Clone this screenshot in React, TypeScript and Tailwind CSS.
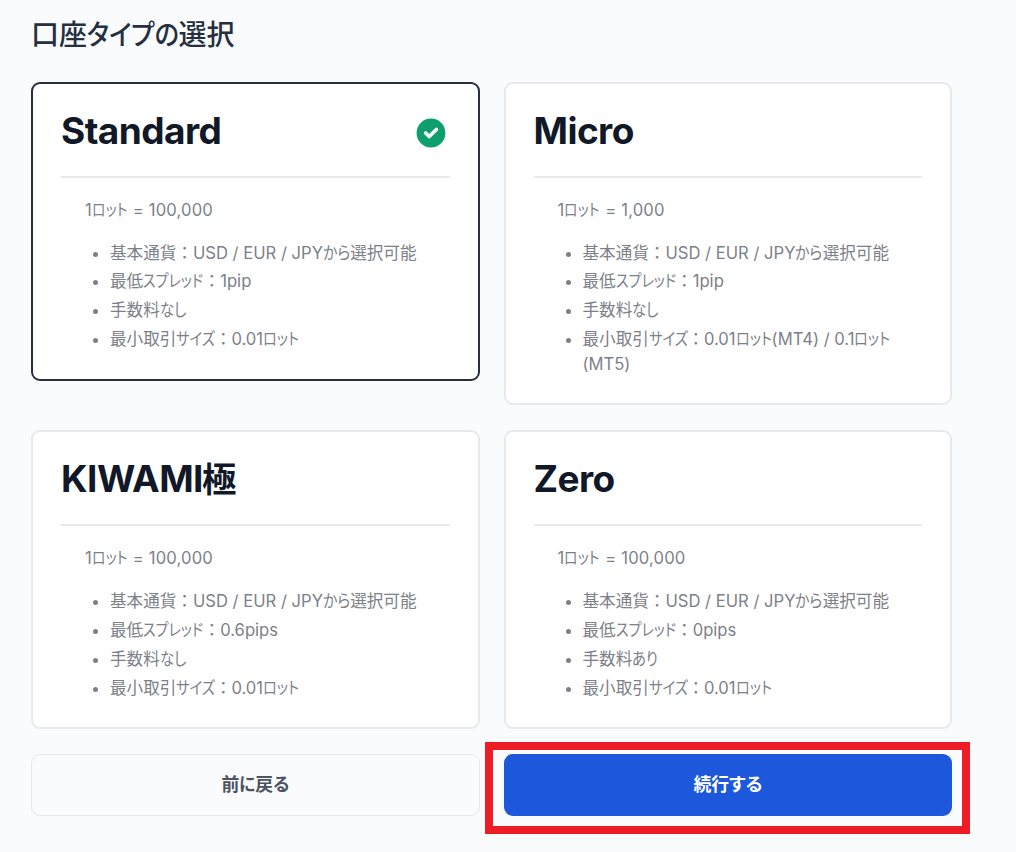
import { useLayoutEffect, useRef, useState } from "react";
import clsx from "clsx";

type Account = {
  name: string;
  lot: string;
  features: string[];
};

const ACCOUNTS: Account[] = [
  {
    name: "Standard",
    lot: "1ロット = 100,000",
    features: [
      "基本通貨：USD / EUR / JPYから選択可能",
      "最低スプレッド：1pip",
      "手数料なし",
      "最小取引サイズ：0.01ロット",
    ],
  },
  {
    name: "Micro",
    lot: "1ロット = 1,000",
    features: [
      "基本通貨：USD / EUR / JPYから選択可能",
      "最低スプレッド：1pip",
      "手数料なし",
      "最小取引サイズ：0.01ロット(MT4) / 0.1ロット(MT5)",
    ],
  },
  {
    name: "KIWAMI極",
    lot: "1ロット = 100,000",
    features: [
      "基本通貨：USD / EUR / JPYから選択可能",
      "最低スプレッド：0.6pips",
      "手数料なし",
      "最小取引サイズ：0.01ロット",
    ],
  },
  {
    name: "Zero",
    lot: "1ロット = 100,000",
    features: [
      "基本通貨：USD / EUR / JPYから選択可能",
      "最低スプレッド：0pips",
      "手数料あり",
      "最小取引サイズ：0.01ロット",
    ],
  },
];

// Width of each kana run in em, for narrow UI style kana.
const KANA_WIDTH: Record<string, number> = {
  ロット: 2.17,
  から: 1.64,
  スプレッド: 3.64,
  なし: 1.54,
  あり: 1.54,
  サイズ: 2.32,
  タイプの: 3.27,
  に: 0.9,
  る: 0.9,
  する: 1.86,
};

function Kana({ text, width }: { text: string; width: number }) {
  const outer = useRef<HTMLSpanElement>(null);
  const inner = useRef<HTMLSpanElement>(null);
  const [scale, setScale] = useState(1);

  useLayoutEffect(() => {
    if (outer.current && inner.current) {
      setScale(outer.current.offsetWidth / inner.current.offsetWidth);
    }
  }, [text, width]);

  return (
    <span ref={outer} className="inline-block whitespace-nowrap" style={{ width: `${width}em` }}>
      <span
        ref={inner}
        className="inline-block origin-left [font-feature-settings:'palt']"
        style={{ transform: `scaleX(${scale})` }}
      >
        {text}
      </span>
    </span>
  );
}

function Jp({ text }: { text: string }) {
  return (
    <>
      {text.split(/([\u3041-\u30ff]+)/).map((part, i) => {
        const width = KANA_WIDTH[part];
        return width ? <Kana key={i} text={part} width={width} /> : part;
      })}
    </>
  );
}

function CheckBadge() {
  return (
    <svg viewBox="0 0 20 20" fill="currentColor" className="mt-[3px] mr-px size-9 text-[#0e9f6e]">
      <path
        fillRule="evenodd"
        clipRule="evenodd"
        d="M10 18a8 8 0 100-16 8 8 0 000 16zm3.707-9.293a1 1 0 00-1.414-1.414L9 10.586 7.707 9.293a1 1 0 00-1.414 1.414l2 2a1 1 0 001.414 0l4-4z"
      />
    </svg>
  );
}

type AccountCardProps = {
  account: Account;
  selected: boolean;
  onSelect: () => void;
};

function AccountCard({ account, selected, onSelect }: AccountCardProps) {
  return (
    <div
      onClick={onSelect}
      className={clsx(
        "cursor-pointer rounded-[9px] border-2 bg-white px-7 pt-7 pb-[27px]",
        selected ? "border-[#252f3f]" : "border-[#e7e9ec]",
      )}
    >
      <div className="flex h-[66px] items-start justify-between border-b-2 border-[#e7e9ec]">
        <h2 className="text-[37px] leading-[38px] font-bold tracking-[-0.015em] text-[#111928]">
          {account.name.split(/(極)/).map((part, i) =>
            part === "極" ? (
              <span key={i} className="-ml-px text-[34.5px] leading-none">
                {part}
              </span>
            ) : (
              part
            ),
          )}
        </h2>
        {selected && <CheckBadge />}
      </div>
      <div className="pl-6 text-[16.6px] leading-[24.6px] text-[#7c8189]">
        <p className="mt-5 tracking-[0.01em]">
          <Jp text={account.lot} />
        </p>
        <ul className="mt-[18px] list-disc space-y-[4.3px] pl-[25px]">
          {account.features.map((feature) => (
            <li key={feature}>
              <Jp text={feature} />
            </li>
          ))}
        </ul>
      </div>
    </div>
  );
}

export default function App() {
  const [selected, setSelected] = useState("Standard");

  return (
    <main className="min-h-[852px] bg-[#f9fbfd] pt-[17px] pl-[31px] font-['Inter','Noto_Sans_CJK_JP',sans-serif]">
      <h1 className="text-[28px] leading-9 font-medium text-[#252f3f]">
        <Jp text="口座タイプの選択" />
      </h1>
      <div className="mt-[29px] grid w-[921px] grid-cols-2 items-start gap-x-6 gap-y-[24.8px]">
        {ACCOUNTS.map((account) => (
          <AccountCard
            key={account.name}
            account={account}
            selected={selected === account.name}
            onSelect={() => setSelected(account.name)}
          />
        ))}
        <button className="h-[62px] rounded-[9px] border border-[#e5e7eb] pt-px text-[17.8px] font-bold text-[#4b5260]">
          <Jp text="前に戻る" />
        </button>
        <div className="relative">
          <button className="h-[62px] w-full rounded-[9px] bg-[#1c57dc] pt-px text-[17.8px] font-bold text-white">
            <Jp text="続行する" />
          </button>
          <div className="pointer-events-none absolute -top-3 -right-[18px] -bottom-[18px] -left-[19px] border-8 border-[#ee1c24]" />
        </div>
      </div>
    </main>
  );
}
